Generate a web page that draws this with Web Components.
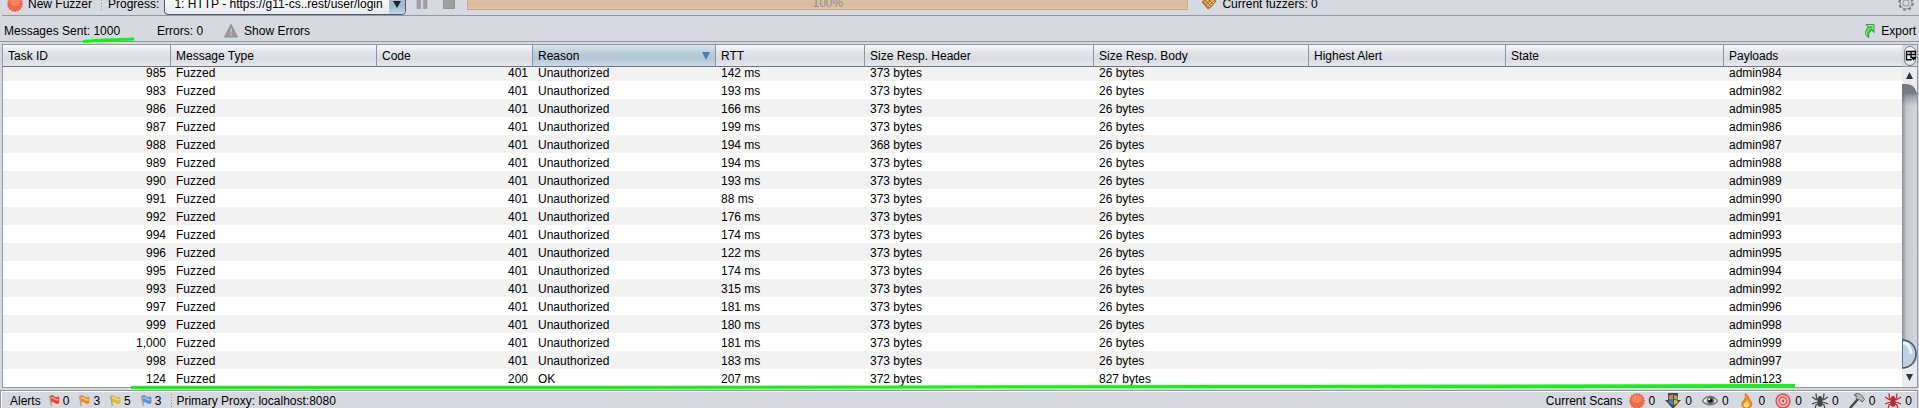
<!DOCTYPE html>
<html lang="en">
<head>
<meta charset="utf-8">
<title>Fuzzer</title>
<style>
body { margin: 0; background: #d6d9e0; color: #000; font: 12px/18px "Liberation Sans", Arial, sans-serif; }
</style>
</head>
<body>
<fuzz-app></fuzz-app>
<script>
/* Points of a toothed disc centred in a 16 unit box. */
const teeth = Array.from({ length: 32 }, (_, i) => {
  const r = i % 2 ? 6.4 : 7.9, a = i * Math.PI / 16;
  return (8 + r * Math.cos(a)).toFixed(1) + ',' + (8 + r * Math.sin(a)).toFixed(1);
}).join(' ');

const ICONS = {
  burst: `<polygon fill="#f4694a" stroke="#dd4429" stroke-width=".5" points="${teeth}"/><ellipse cx="8" cy="6" rx="5" ry="4" fill="#ff9373" opacity=".6"/>`,
  pause: '<path fill="#a0a0a0" stroke="#949494" stroke-width=".6" d="M3 0h3.500v12.500H3zM9.500 0H13v12.500H9.500z"/>',
  stop: '<path fill="#a0a0a0" stroke="#949494" d="M2.500.5h11v12h-11z"/>',
  broom: '<path fill="#c99645" stroke="#8c6430" stroke-width=".8" d="M1 6l7-6 7 5-5 6-3 2z"/><path fill="none" stroke="#f0d28a" d="M4 7l5-5M6 10l6-6M8 11l5-5"/><path fill="none" stroke="#7f5a2a" stroke-width=".7" d="M2 6l6 6M5 5l5 5M7 3l5 5"/>',
  gear: '<circle cx="8" cy="7" r="6.500" fill="none" stroke="#7d7d7d" stroke-width="2.600" stroke-dasharray="2.550 2.550"/><circle cx="8" cy="7" r="4.500" fill="none" stroke="#7d7d7d" stroke-width="3.400"/><circle cx="8" cy="7" r="4.500" fill="none" stroke="#dcdcdc" stroke-width="2"/>',
  warn: '<path fill="#999" stroke="#8b8b8b" stroke-linejoin="round" d="M8 1.500L14.500 14h-13z"/><path stroke="#c4c4c4" stroke-width="1.600" d="M8 5.500v4M8 11v1.500"/>',
  export: '<path fill="#47c247" stroke="#1c8f2e" stroke-width=".8" d="M6 1.500h8v8l-2.300-2.300C9 9 8 11 9 14.500 5 13 4 8.500 8.500 4z"/><path fill="none" stroke="#b5efa5" d="M8 2.500h5v4M10 5C7 7.500 6 9.500 6.800 12"/>',
  flag: '<path fill="currentColor" stroke="currentColor" stroke-width=".7" d="M4 3c2-1 3-.5 4 .5S10.500 4.500 13 4v6c-2 1-3 .5-4.500-.5S6 8.500 5 9z"/><path fill="none" stroke="#fff" stroke-width="1.600" opacity=".5" d="M5 5c1.800-.8 2.300 0 3.600.9s2.300 1 3.700.6"/><path stroke="#aaa49c" stroke-width="1.500" d="M3.500 3l2 10"/>',
  shield: '<path fill="#444b55" d="M3 0h10v7h3l-8 9L0 7h3z"/><path fill="#d98335" d="M4 2.500l4-1v5H4z"/><path fill="#8eb74e" d="M9 2l3.500 1v4L9 6z"/><path fill="#4388cc" d="M4 7.500L8 7v5L4 10z"/><path fill="#e9bd3c" d="M9 7l3.500.5V10L9 12z"/>',
  eye: '<path fill="#eee" stroke="#777" stroke-width="1.400" d="M.5 8c3.500-6 11.500-6 15 0-3.500 5-11.500 5-15 0z"/><circle cx="8.500" cy="7.500" r="3.800" fill="#666"/><circle cx="8.500" cy="7.500" r="2" fill="#111"/><circle cx="7.300" cy="6.200" r="1" fill="#fff"/>',
  flame: '<path fill="#f18a20" stroke="#d35f12" stroke-width=".6" d="M6 .5c5 2.500 3 5 6 7.500 2.500 4-.5 7.500-4 7.500S1.500 13 3 9.500c1.500-2 4.500-4 3-9z"/><path fill="#ffe676" d="M8 7c.5 3 3.500 3.500 2 6-1 2-5 2-5.500-.5C4.500 10 7.500 10 8 7z"/>',
  target: '<circle cx="8" cy="8" r="6.800" fill="#f6d4d2" stroke="#db5252" stroke-width="1.700"/><circle cx="8" cy="8" r="3.800" fill="none" stroke="#dd5a5a" stroke-width="1.700"/><circle cx="8" cy="8" r="1.400" fill="#d94848"/>',
  spider: '<path fill="none" stroke="currentColor" stroke-width="1.200" d="M8 8L4.500 5 4 .5M8 8L4 6.500 0 4M8 9l-4 .5L0 11M8 10l-4 2-1 4M8 8l3.500-3L12 .5M8 8l4-1.500L16 4M8 9l4 .5 4 1.500M8 10l4 2 1 4"/><ellipse cx="8" cy="10" rx="2.600" ry="3.800" fill="currentColor"/><circle cx="8" cy="5" r="2" fill="currentColor"/>',
  hammer: '<path stroke="#444" stroke-width="2.400" stroke-linecap="round" d="M1.500 14.500L9 6"/><path fill="#bbb" stroke="#555" stroke-width=".9" d="M5 2C8-.5 11 .5 13 3l2.700 3.500L13 9l-2.500-2.500L9 7 7 4.500l1-1z"/>',
  columns: '<path fill="none" stroke="#000" stroke-width="1.800" d="M9 13H2V2h12v5M2 6h12M8 2v9"/><path d="M7 9h9l-4.500 5z"/>'
};

/* Registers an element whose shadow root is cloned from a template. */
function define(name, css, html, init) {
  const template = document.createElement('template');
  template.innerHTML = `<style>*{box-sizing:border-box}${css}</style>${html}`;
  customElements.define(name, class extends HTMLElement {
    constructor() {
      super();
      this.attachShadow({ mode: 'open' }).append(template.content.cloneNode(true));
    }
    connectedCallback() { if (init) init(this.shadowRoot, this); }
  });
}

define('ui-icon', ':host{display:block;flex:none;width:16px;height:16px}svg{display:block;width:100%;height:100%}',
  '<svg viewBox="0 0 16 16" aria-hidden="true"></svg>',
  (root, host) => { root.querySelector('svg').innerHTML = ICONS[host.getAttribute('name')]; });

define('tool-button', `:host{display:block;flex:none}
button{display:flex;align-items:center;gap:5px;border:0;padding:0;background:none;font:inherit;color:inherit;white-space:nowrap}`,
  '<button type="button"><slot name="icon"></slot><slot></slot></button>',
  (root, host) => { if (host.title) root.querySelector('button').setAttribute('aria-label', host.title); });

define('icon-count', ':host{display:flex;align-items:center;gap:var(--count-gap,4px);white-space:nowrap}', '<slot name="icon"></slot><slot></slot>');

define('dot-separator', ':host{display:block;width:1px;height:14px;background:repeating-linear-gradient(#8b9097 0 1px,transparent 1px 3px)}', '');

define('fuzz-toolbar', `
:host{display:block;height:16px;margin-left:2px;border-bottom:1px solid #9297a1;overflow:hidden}
.bar{display:flex;align-items:center;height:26px;margin-top:-9px;padding:0 5px}
.sep{margin:0 6px 0 9px}
.pick{position:relative;margin-left:5px;width:242px;height:22px;flex:none}
select{display:block;appearance:none;width:100%;height:22px;padding:0 20px 0 9px;border:1px solid #4d5a6b;border-radius:4px;background:linear-gradient(#fff,#e7e9ee);font:inherit;line-height:20px;color:inherit}
.arrow{position:absolute;right:1px;top:1px;width:16px;height:20px;border-radius:0 4px 4px 0;background:linear-gradient(#a9c1d3,#9cbad0 60%,#bdd8ea);pointer-events:none}
.arrow svg{display:block;margin:7px 0 0 4px}
.pause{margin-left:8px}.stop{margin-left:11px}
.progress{align-self:flex-start;width:721px;height:19px;margin:0 13px 0 10px;border:1px solid #c9a890;background:linear-gradient(#e5c9ad,#d6bb9c 70%,#dec4a6);color:#8e8f97;text-align:center;line-height:22px;flex:none}
.gear{margin-left:auto}
`, `<div class="bar">
<tool-button><ui-icon slot="icon" name="burst"></ui-icon>New Fuzzer</tool-button>
<dot-separator class="sep"></dot-separator>
<label for="job">Progress:</label>
<div class="pick"><select id="job"><option>1: HTTP - https://g11-cs..rest/user/login</option></select>
<span class="arrow"><svg width="8" height="7" aria-hidden="true"><path d="M0 0h8L4 7z" fill="#222"/></svg></span></div>
<tool-button class="pause" title="Pause"><ui-icon slot="icon" name="pause"></ui-icon></tool-button>
<tool-button class="stop" title="Stop"><ui-icon slot="icon" name="stop"></ui-icon></tool-button>
<div class="progress" role="progressbar" aria-label="Progress" aria-valuenow="100">100%</div>
<tool-button><ui-icon slot="icon" name="broom"></ui-icon>Current fuzzers: 0</tool-button>
<tool-button class="gear" title="Options"><ui-icon slot="icon" name="gear"></ui-icon></tool-button>
</div>`);

define('fuzz-summary', `
:host{display:flex;box-sizing:border-box;align-items:center;height:26px;padding:4px 3px 0 4px;border-bottom:1px solid #9297a1}
.sent{position:relative}
.sent svg{position:absolute;left:78px;top:14px}
.errors{margin:0 20px 0 37px}.export{margin-left:auto}
`, `<span class="sent">Messages Sent: 1000<svg width="54" height="8" aria-hidden="true"><path d="M2 5.500C18 3.500 34 4 51 3" fill="none" stroke="#0f0" stroke-width="3" stroke-linecap="round"/></svg></span>
<span class="errors">Errors: 0</span>
<tool-button><ui-icon slot="icon" name="warn"></ui-icon>Show Errors</tool-button>
<tool-button class="export"><ui-icon slot="icon" name="export"></ui-icon>Export</tool-button>`);

define('scroll-track', `
:host{display:flex;flex-direction:column;width:15px;flex:none;background:linear-gradient(90deg,#8d9098,#c5c8cf 30%,#d5d8de)}
svg{display:block}
.track{flex:1;background:linear-gradient(#5558,#5550 12px)}
`, `<svg width="15" height="27" aria-hidden="true"><path d="M0 17h15v10H0z" fill="#777b84"/><path d="M0 0h15v27C13 18 9 17 0 17z" fill="#e9ebef"/><path d="M7.500 5l3.500 7H4z" fill="#333"/></svg>
<div class="track"></div>
<svg width="15" height="48" aria-hidden="true"><path d="M0 29c8 0 14-3 15-8v27H0z" fill="#e9ebef"/><path d="M0 1c8 0 14 6 14 14S8 29 0 29z" fill="#bcd3e4" stroke="#3f566e" stroke-width="1.500"/><path d="M1 4c5 0 8 5 8 11" fill="none" stroke="#e9f3fa" stroke-width="3"/><path d="M7.500 42l3.500-7H4z" fill="#333"/></svg>`);

define('fuzz-table', `
:host{display:grid;box-sizing:border-box;position:relative;grid-template:22px 1fr / 1fr 15px;height:344px;margin:2px 1px 0 2px;border:1px solid #9297a1;background:#fff}
.view{grid-row:1/3;overflow:hidden}
table{width:100%;table-layout:fixed;border-collapse:separate;border-spacing:0}
th,td{padding:2px 5px 0;text-align:left;font-weight:400;white-space:nowrap;overflow:hidden}
th{height:22px;line-height:19px;border-right:1px solid #90949d;border-bottom:1px solid #6f737b;background:linear-gradient(#fafafc,#e4e6eb 30%,#d8dbe1 65%,#e6e8ec)}
th:last-child{border-right:0}
th[aria-sort]{background:linear-gradient(#d9e5ed,#b8ccd9 40%,#b2c7d5 65%,#c9dbe7)}
th svg{float:right;margin-top:5px}
td{height:18px;line-height:16px}
tbody tr:first-child td{height:14px;padding-top:0;line-height:12px;vertical-align:top}
tbody tr:nth-child(odd) td{background:#f2f2f2}
td.n{text-align:right}
.corner{display:grid;place-items:center;background:#d6d9e0;border-bottom:1px solid #9297a1}
.corner button{width:12px;height:20px;padding:0;display:grid;place-items:center;border:1px solid #737984;border-radius:6px;background:linear-gradient(#fff,#dfe2e8)}
.corner ui-icon{width:12px;height:12px}
.mark{position:absolute;left:126px;top:338px;pointer-events:none}
`, `<div class="view"><table><colgroup></colgroup><thead><tr></tr></thead><tbody></tbody></table></div>
<div class="corner"><button type="button" aria-label="Columns"><ui-icon name="columns"></ui-icon></button></div>
<scroll-track></scroll-track>
<svg class="mark" width="1668" height="8" aria-hidden="true"><path d="M2 4.500H460L1100 3.500 1666 2.500" fill="none" stroke="#0f0" stroke-width="3"/></svg>`,
root => {
  const cols = [['Task ID', 168], ['Message Type', 206], ['Code', 156], ['Reason', 183], ['RTT', 149],
    ['Size Resp. Header', 229], ['Size Resp. Body', 215], ['Highest Alert', 197], ['State', 218], ['Payloads', 0]];
  root.querySelector('colgroup').innerHTML = cols.map(c => c[1] ? `<col style="width:${c[1]}px">` : '<col>').join('');
  root.querySelector('thead tr').innerHTML = cols.map(c => c[0] === 'Reason'
    ? '<th scope="col" aria-sort="descending">Reason<svg width="8" height="8" aria-hidden="true"><path d="M0 0h8L4 8z" fill="#4b7eb0"/></svg></th>'
    : `<th scope="col">${c[0]}</th>`).join('');
  const rows = [['985', 142, 984], ['983', 193, 982], ['986', 166, 985], ['987', 199, 986], ['988', 194, 987, 368],
    ['989', 194, 988], ['990', 193, 989], ['991', 88, 990], ['992', 176, 991], ['994', 174, 993], ['996', 122, 995],
    ['995', 174, 994], ['993', 315, 992], ['997', 181, 996], ['999', 180, 998], ['1,000', 181, 999], ['998', 183, 997],
    ['124', 207, 123, 372, 200, 'OK', 827]];
  root.querySelector('tbody').innerHTML = rows.map(([id, rtt, pay, head = 373, code = 401, reason = 'Unauthorized', body = 26]) =>
    `<tr><td class="n">${id}</td><td>Fuzzed</td><td class="n">${code}</td><td>${reason}</td><td>${rtt} ms</td><td>${head} bytes</td><td>${body} bytes</td><td></td><td></td><td>admin${pay}</td></tr>`).join('');
});

define('fuzz-footer', `
:host{display:flex;box-sizing:border-box;align-items:center;height:18px;margin:2px 1px 0 0;padding:2px 0 0 9px;border:1px solid #9297a1;border-bottom:0;box-shadow:inset 1px 1px #fff}
.alerts,.scans{display:flex}
.alerts{--count-gap:1px;gap:7px;margin:0 10px 0 5px}
.scans{gap:10px;margin:0 5px 0 6px}
.label{margin-left:auto}
.proxy{margin-left:4px}
.red{color:#e8452c}.orange{color:#f08c1c}.yellow{color:#e2b81e}.blue{color:#5290cf}
`, `<span>Alerts</span>
<div class="alerts">
<icon-count><ui-icon slot="icon" name="flag" class="red"></ui-icon>0</icon-count>
<icon-count><ui-icon slot="icon" name="flag" class="orange"></ui-icon>3</icon-count>
<icon-count><ui-icon slot="icon" name="flag" class="yellow"></ui-icon>5</icon-count>
<icon-count><ui-icon slot="icon" name="flag" class="blue"></ui-icon>3</icon-count>
</div><dot-separator></dot-separator><span class="proxy">Primary Proxy: localhost:8080</span>
<span class="label">Current Scans</span><div class="scans"></div>`,
root => {
  root.querySelector('.scans').innerHTML = [['burst'], ['shield'], ['eye'], ['flame'], ['target'], ['spider', '#444'], ['hammer'], ['spider', '#c3232a']]
    .map(([n, c = 'inherit']) => `<icon-count><ui-icon slot="icon" name="${n}" style="color:${c}"></ui-icon><span>0</span></icon-count>`).join('');
});

define('fuzz-app', ':host{display:block}', '<fuzz-toolbar></fuzz-toolbar><fuzz-summary></fuzz-summary><fuzz-table></fuzz-table><fuzz-footer></fuzz-footer>');
</script>
</body>
</html>
